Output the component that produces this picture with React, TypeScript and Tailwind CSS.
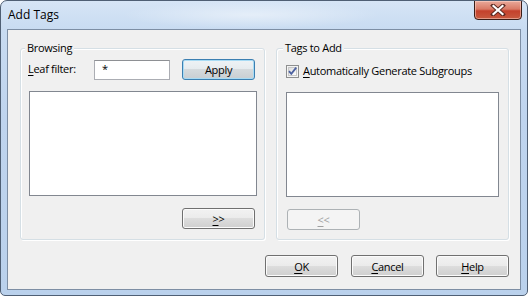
import React from "react";

const font = { fontFamily: '"Open Sans", "Noto Sans", sans-serif' };

function U({ c }: { c: string }) {
  return <span className="underline underline-offset-[2px] decoration-[1px]">{c}</span>;
}

function Btn({
  children,
  className = "",
  variant = "normal",
}: {
  children: React.ReactNode;
  className?: string;
  variant?: "normal" | "default" | "disabled";
}) {
  const base =
    "flex items-center justify-center rounded-[3px] border text-[11px] leading-none";
  const v =
    variant === "default"
      ? "border-[#3c7fb1] bg-[linear-gradient(#eef3f6_0%,#e6ebee_48%,#d5dadd_50%,#c9ced2_100%)] shadow-[inset_0_0_0_1px_#a8dbf4] text-black"
      : variant === "disabled"
      ? "border-[#adb2b5] bg-[#f4f4f4] text-[#a0a0a0]"
      : "border-[#707070] bg-[linear-gradient(#f2f2f2_0%,#ebebeb_48%,#dddddd_50%,#cfcfcf_100%)] shadow-[inset_0_0_0_1px_#fbfbfb] text-black";
  return <div className={`${base} ${v} ${className}`}>{children}</div>;
}

export default function App() {
  return (
    <div className="w-[528px] h-[296px] bg-white" style={font}>
      <div className="relative w-[528px] h-[296px] rounded-t-[7px] rounded-b-[5px] border border-[#4f5f74] bg-[linear-gradient(180deg,#d6e5f6_0%,#c8dbf1_10%,#bfd4ee_40%,#bad1ec_100%)] overflow-hidden flex flex-col">
        {/* title glass highlight */}
        <div className="absolute left-[120px] top-0 w-[260px] h-[28px] bg-[radial-gradient(ellipse_at_center,rgba(255,255,255,0.45),rgba(255,255,255,0)_70%)] pointer-events-none" />
        {/* Title */}
        <div className="relative h-[28px] pl-[7px] flex items-center text-[12px] text-black">
          Add Tags
        </div>
        {/* Close button */}
        <div className="absolute top-[-1px] right-[5px] w-[48px] h-[20px] rounded-b-[4px] border border-[#3a1d17] bg-[linear-gradient(180deg,#e9a99a_0%,#d97a66_45%,#c4412c_55%,#c75a3f_100%)] shadow-[inset_0_0_0_1px_rgba(255,220,210,0.5)] flex items-center justify-center">
          <svg width="16" height="12" viewBox="0 0 16 12">
            <path d="M3 1.5 L13 10.5 M13 1.5 L3 10.5" stroke="#5a2a22" strokeWidth="4" strokeLinecap="square" />
            <path d="M3.5 2 L12.5 10 M12.5 2 L3.5 10" stroke="#ffffff" strokeWidth="2.2" strokeLinecap="square" />
          </svg>
        </div>

        {/* Client area */}
        <div className="ml-[6px] w-[514px] h-[261px] border border-[#7d8ea4] bg-[#f0f0f0] flex flex-col text-[11px] tracking-[-0.3px] text-black">
          <div className="mt-[18px] ml-[12px] flex gap-[11px]">
            {/* Browsing group */}
            <div className="relative w-[245px] h-[192px] rounded-[3px] border border-[#d5dfe5] shadow-[inset_1px_1px_0_#ffffff,1px_1px_0_#ffffff] flex flex-col">
              <div className="absolute -top-[9px] left-[4px] px-[2px] bg-[#f0f0f0] leading-[15px]">
                Browsing
              </div>
              <div className="mt-[10px] ml-[7px] h-[21px] flex items-center">
                <div className="w-[66px]">
                  <U c="L" />eaf filter:
                </div>
                <div className="w-[76px] h-[20px] border border-[#abadb3] border-t-[#8e9094] bg-white flex items-center pl-[7px] text-[11px]">
                  *
                </div>
                <Btn variant="default" className="ml-[12px] w-[73px] h-[21px]">
                  Apply
                </Btn>
              </div>
              <div className="mt-[11px] ml-[8px] w-[228px] h-[105px] border border-[#828790] bg-white" />
              <Btn className="mt-[12px] ml-[161px] w-[73px] h-[21px]">
                <span>
                  <U c=">" />&gt;
                </span>
              </Btn>
            </div>

            {/* Tags to Add group */}
            <div className="relative w-[233px] h-[192px] rounded-[3px] border border-[#d5dfe5] shadow-[inset_1px_1px_0_#ffffff,1px_1px_0_#ffffff] flex flex-col">
              <div className="absolute -top-[9px] left-[6px] px-[2px] bg-[#f0f0f0] leading-[15px]">
                Tags to Add
              </div>
              <div className="mt-[16px] ml-[9px] h-[13px] flex items-center">
                <svg width="13" height="13" viewBox="0 0 13 13">
                  <defs>
                    <linearGradient id="cbg" x1="0" y1="0" x2="1" y2="1">
                      <stop offset="0" stopColor="#dcdcdc" />
                      <stop offset="1" stopColor="#ffffff" />
                    </linearGradient>
                  </defs>
                  <rect x="0.5" y="0.5" width="12" height="12" fill="#f4f4f4" stroke="#8e8f8f" />
                  <rect x="2.5" y="2.5" width="8" height="8" fill="url(#cbg)" stroke="#c8c8c8" />
                  <path d="M3 6.2 L5.3 8.8 L10.2 2.6" fill="none" stroke="#4c61a0" strokeWidth="1.8" />
                </svg>
                <span className="ml-[4px]">
                  <U c="A" />utomatically Generate Subgroups
                </span>
              </div>
              <div className="mt-[14px] ml-[9px] w-[213px] h-[105px] border border-[#828790] bg-white" />
              <Btn variant="disabled" className="mt-[12px] ml-[10px] w-[73px] h-[21px]">
                <span>
                  <U c="<" />&lt;
                </span>
              </Btn>
            </div>
          </div>

          {/* Bottom buttons */}
          <div className="mt-[15px] pr-[11px] flex justify-end">
            <Btn className="w-[73px] h-[22px]">
              <span>
                <U c="O" />K
              </span>
            </Btn>
            <Btn className="ml-[13px] w-[73px] h-[22px]">
              <span>
                <U c="C" />ancel
              </span>
            </Btn>
            <Btn className="ml-[12px] w-[73px] h-[22px]">
              <span>
                <U c="H" />elp
              </span>
            </Btn>
          </div>
        </div>
      </div>
    </div>
  );
}
